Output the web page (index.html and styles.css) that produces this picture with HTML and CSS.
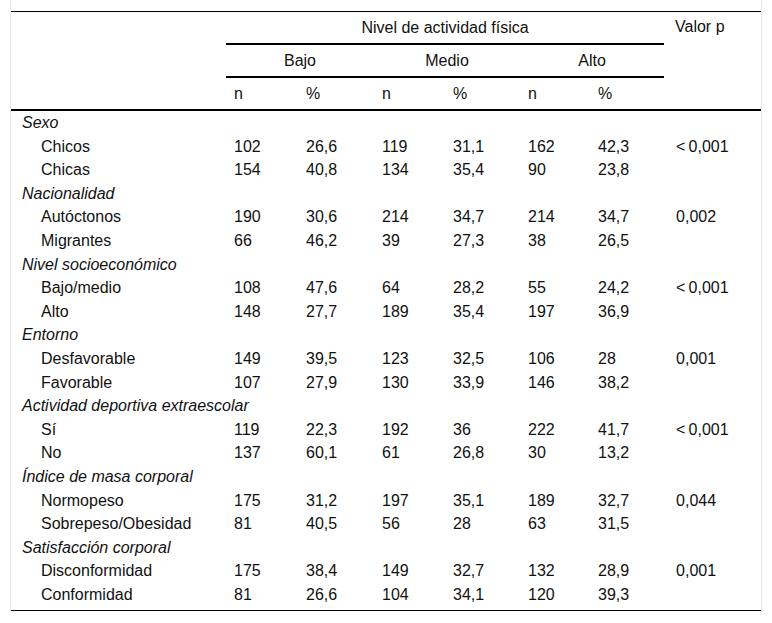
FILE: index.html
```html
<!DOCTYPE html>
<html lang="es">
<head>
<meta charset="utf-8">
<title>Nivel de actividad física</title>
<link rel="stylesheet" href="styles.css">
</head>
<body>
<div class="frame">
<table class="data">
  <colgroup>
    <col class="c-label"><col class="c1"><col class="c2"><col class="c3"><col class="c4"><col class="c5"><col class="c6"><col class="c-p">
  </colgroup>
  <thead>
    <tr class="h1">
      <th rowspan="3" class="blank"></th>
      <th colspan="6" class="group">Nivel de actividad física</th>
      <th rowspan="3" class="pval">Valor p</th>
    </tr>
    <tr class="h2">
      <th colspan="2" class="group">Bajo</th>
      <th colspan="2" class="group">Medio</th>
      <th colspan="2" class="group">Alto</th>
    </tr>
    <tr class="h3">
      <th>n</th><th>%</th><th>n</th><th>%</th><th>n</th><th>%</th>
    </tr>
  </thead>
  <tbody>
    <tr class="cat"><td colspan="8">Sexo</td></tr>
    <tr><td class="lbl">Chicos</td><td>102</td><td>26,6</td><td>119</td><td>31,1</td><td>162</td><td>42,3</td><td class="p">&lt;&#8201;0,001</td></tr>
    <tr><td class="lbl">Chicas</td><td>154</td><td>40,8</td><td>134</td><td>35,4</td><td>90</td><td>23,8</td><td class="p"></td></tr>
    <tr class="cat"><td colspan="8">Nacionalidad</td></tr>
    <tr><td class="lbl">Autóctonos</td><td>190</td><td>30,6</td><td>214</td><td>34,7</td><td>214</td><td>34,7</td><td class="p">0,002</td></tr>
    <tr><td class="lbl">Migrantes</td><td>66</td><td>46,2</td><td>39</td><td>27,3</td><td>38</td><td>26,5</td><td class="p"></td></tr>
    <tr class="cat"><td colspan="8">Nivel socioeconómico</td></tr>
    <tr><td class="lbl">Bajo/medio</td><td>108</td><td>47,6</td><td>64</td><td>28,2</td><td>55</td><td>24,2</td><td class="p">&lt;&#8201;0,001</td></tr>
    <tr><td class="lbl">Alto</td><td>148</td><td>27,7</td><td>189</td><td>35,4</td><td>197</td><td>36,9</td><td class="p"></td></tr>
    <tr class="cat"><td colspan="8">Entorno</td></tr>
    <tr><td class="lbl">Desfavorable</td><td>149</td><td>39,5</td><td>123</td><td>32,5</td><td>106</td><td>28</td><td class="p">0,001</td></tr>
    <tr><td class="lbl">Favorable</td><td>107</td><td>27,9</td><td>130</td><td>33,9</td><td>146</td><td>38,2</td><td class="p"></td></tr>
    <tr class="cat"><td colspan="8">Actividad deportiva extraescolar</td></tr>
    <tr><td class="lbl">Sí</td><td>119</td><td>22,3</td><td>192</td><td>36</td><td>222</td><td>41,7</td><td class="p">&lt;&#8201;0,001</td></tr>
    <tr><td class="lbl">No</td><td>137</td><td>60,1</td><td>61</td><td>26,8</td><td>30</td><td>13,2</td><td class="p"></td></tr>
    <tr class="cat"><td colspan="8">Índice de masa corporal</td></tr>
    <tr><td class="lbl">Normopeso</td><td>175</td><td>31,2</td><td>197</td><td>35,1</td><td>189</td><td>32,7</td><td class="p">0,044</td></tr>
    <tr><td class="lbl">Sobrepeso/Obesidad</td><td>81</td><td>40,5</td><td>56</td><td>28</td><td>63</td><td>31,5</td><td class="p"></td></tr>
    <tr class="cat"><td colspan="8">Satisfacción corporal</td></tr>
    <tr><td class="lbl">Disconformidad</td><td>175</td><td>38,4</td><td>149</td><td>32,7</td><td>132</td><td>28,9</td><td class="p">0,001</td></tr>
    <tr class="last"><td class="lbl">Conformidad</td><td>81</td><td>26,6</td><td>104</td><td>34,1</td><td>120</td><td>39,3</td><td class="p"></td></tr>
  </tbody>
</table>
</div>
</body>
</html>
```
FILE: styles.css
```css
html, body {
  margin: 0;
  padding: 0;
  background: #fff;
}

.frame {
  margin-left: 10px;
  width: 750px;
  padding-top: 11px;
  padding-bottom: 1px;
  border-left: 1px solid #e9e9e9;
  border-right: 1px solid #e9e9e9;
}

.data {
  width: 750px;
  table-layout: fixed;
  border-collapse: separate;
  border-spacing: 0;
  border-top: 1px solid #000;
  border-bottom: 1px solid #000;
  font-family: "Liberation Sans", Arial, sans-serif;
  font-size: 16px;
  color: #111;
}

.c-label { width: 215px; }
.c1 { width: 72px; }
.c2 { width: 76px; }
.c3 { width: 71px; }
.c4 { width: 75px; }
.c5 { width: 70px; }
.c6 { width: 74px; }
.c-p { width: 97px; }

.data th {
  font-weight: normal;
  text-align: left;
  padding: 0 0 0 8px;
  height: 31px;
  line-height: 18px;
  vertical-align: middle;
}

.data thead .group {
  text-align: center;
  padding: 0;
  border-bottom: 2px solid #000;
}

.data thead .blank {
  border-bottom: 2px solid #000;
}

.data thead .pval {
  vertical-align: top;
  padding-top: 6px;
  padding-left: 11px;
  border-bottom: 2px solid #000;
}

.data .h3 th {
  border-bottom: 2px solid #000;
}

.data td {
  padding: 0 0 0 8px;
  line-height: 23.6px;
  white-space: nowrap;
}

.data .cat td {
  font-style: italic;
  padding-left: 11px;
}

.data td.lbl {
  padding-left: 30px;
}

.data td.p {
  padding-left: 12px;
}

.data .last td {
  padding-bottom: 4px;
}
```
